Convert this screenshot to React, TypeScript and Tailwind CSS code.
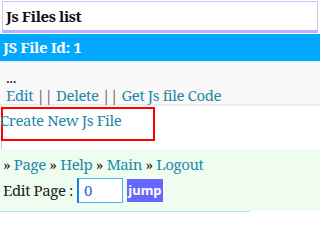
export default function App() {
  return (
    <div
      className="relative h-[212px] w-[320px] overflow-hidden bg-white text-[15px] leading-[19px] tracking-[-0.4px] text-[#222]"
      style={{ fontFamily: '"Noto Serif", "DejaVu Serif", serif' }}
    >
      {/* title box */}
      <div className="mx-[2px] mt-[1px] flex h-[32px] items-center border border-b-[3px] border-[#c9c9ff] border-b-[#b3b3ff] pl-[3px] font-bold text-[#111]">
        Js Files list
      </div>

      <div className="mt-[1px] flex h-[28px] items-center border-b border-[#cdeeff] bg-[#00a9fe] pl-[3px] font-bold text-white">
        JS File Id: 1
      </div>

      <div className="h-[42px] bg-[#f9f9f9] pl-[6px] pt-[6px]">
        <div className="leading-[18px]">...</div>
        <div className="leading-[18px] text-[#1f8aa8]">
          Edit <span className="text-[#555]">||</span> Delete <span className="text-[#555]">||</span> Get Js file Code
        </div>
      </div>

      <div className="h-[2px] bg-[#ebebeb]" />

      <div className="ml-[1px] border-l border-[#ccc] pt-[1px]">
        <div className="-ml-[1px] h-[34px] w-[154px] border-2 border-[#ff0000] leading-[22px] text-[#1f8aa8]">
          <span className="-ml-[3px]">Create New Js File</span>
        </div>
        <div className="h-[8px]" />
      </div>

      <div className="h-[62px] bg-[#eefdef] pl-[3px] pt-[6px]">
        <div>
          » <span className="text-[#1f8aa8]">Page</span> » <span className="text-[#1f8aa8]">Help</span> »{' '}
          <span className="text-[#1f8aa8]">Main</span> » <span className="text-[#1f8aa8]">Logout</span>
        </div>
        <div className="mt-[4px] flex items-center">
          <span>Edit Page :</span>
          <div className="ml-[4px] flex h-[25px] w-[46px] items-center border border-l-2 border-[#45b0ff] border-l-[#1a7fe0] bg-white pl-[5px] text-[#3366cc]">
            0
          </div>
          <div
            className="ml-[4px] flex h-[23px] w-[36px] items-center justify-center bg-[#6666ff] text-[13px] font-bold tracking-normal text-white"
            style={{ fontFamily: '"Noto Sans", "DejaVu Sans", sans-serif' }}
          >
            jump
          </div>
        </div>
      </div>
      <div className="absolute bottom-0 left-0 h-[1px] w-[250px] bg-[#b8dcff]" />
    </div>
  );
}
